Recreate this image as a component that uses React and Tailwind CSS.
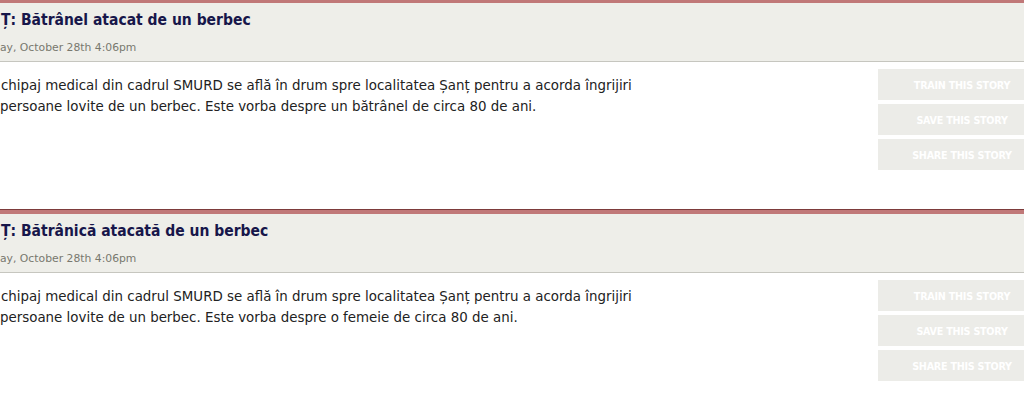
const stories = [
  {
    id: 1,
    title: "Ț: Bătrânel atacat de un berbec",
    date: "ay, October 28th 4:06pm",
    lines: [
      "chipaj medical din cadrul SMURD se află în drum spre localitatea Șanț pentru a acorda îngrijiri",
      "persoane lovite de un berbec. Este vorba despre un bătrânel de circa 80 de ani.",
    ],
  },
  {
    id: 2,
    title: "Ț: Bătrânică atacată de un berbec",
    date: "ay, October 28th 4:06pm",
    lines: [
      "chipaj medical din cadrul SMURD se află în drum spre localitatea Șanț pentru a acorda îngrijiri",
      "persoane lovite de un berbec. Este vorba despre o femeie de circa 80 de ani.",
    ],
  },
];

function Story({ story }) {
  return (
    <div className="flex flex-col">
      {/* maroon top rule */}
      <div className="h-[5px] border-t border-[#7d3b3b] bg-[#c07878]" />

      {/* header */}
      <div className="h-[59px] bg-[#eeeee9] border-b border-[#c6c6bf] whitespace-nowrap">
        <h2
          className="pl-[1px] pt-[5px] text-[15.5px] leading-[24px] font-bold text-[#17164a]"
          style={{ fontFamily: '"DejaVu Sans Condensed", "DejaVu Sans", sans-serif' }}
        >
          {story.title}
        </h2>
        <div className="pt-[9px] text-[10.8px] leading-[14px] text-[#78786e]">
          {story.date}
        </div>
      </div>

      {/* body */}
      <div className="h-[147px] flex bg-white">
        <div className="flex-1 pt-[13px] whitespace-nowrap text-[13.4px] leading-[21px] text-[#222222]">
          <p className="pl-[1px]">{story.lines[0]}</p>
          <p>{story.lines[1]}</p>
        </div>
        <div className="w-[146px] shrink-0 pt-[7px] flex flex-col gap-[4px]">
          {["Train this story", "Save this story", "Share this story"].map((label) => (
            <button
              key={label}
              className="w-[168px] h-[31px] pt-[4px] bg-[#ecece8] text-white uppercase font-bold text-[9.6px] tracking-tight text-center"
            >
              {label}
            </button>
          ))}
        </div>
      </div>
    </div>
  );
}

export default function App() {
  return (
    <div
      className="w-[1024px] h-[406px] overflow-hidden bg-white"
      style={{ fontFamily: '"DejaVu Sans", Verdana, sans-serif' }}
    >
      <div className="-mt-[2px] flex flex-col">
        {stories.map((s) => (
          <Story key={s.id} story={s} />
        ))}
      </div>
    </div>
  );
}
